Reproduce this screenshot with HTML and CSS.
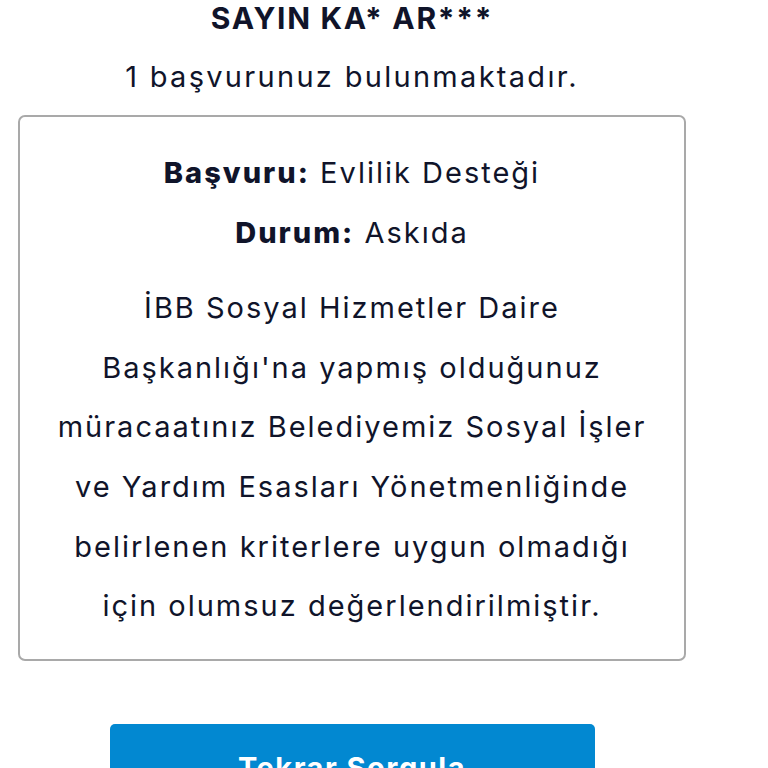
FILE: index.html
```html
<!DOCTYPE html>
<html lang="tr">
<head>
<meta charset="utf-8">
<title>Başvuru Sorgulama</title>
<link rel="stylesheet" href="styles.css">
</head>
<body>
<main class="page">
  <h1 class="title">SAYIN KA* AR***</h1>
  <p class="subtitle">1 başvurunuz bulunmaktadır.</p>
  <section class="card">
    <p class="row"><strong>Başvuru:</strong> Evlilik Desteği</p>
    <p class="row"><strong>Durum:</strong> Askıda</p>
    <p class="message">İBB Sosyal Hizmetler Daire<br>Başkanlığı'na yapmış olduğunuz<br>müracaatınız Belediyemiz Sosyal İşler<br>ve Yardım Esasları Yönetmenliğinde<br>belirlenen kriterlere uygun olmadığı<br>için olumsuz değerlendirilmiştir.</p>
  </section>
  <button class="btn" type="button">Tekrar Sorgula</button>
</main>
</body>
</html>
```
FILE: styles.css
```css
html, body {
  margin: 0;
  padding: 0;
  background: #ffffff;
}
body {
  font-family: Inter, "Open Sans", sans-serif;
  color: #10142a;
  overflow: hidden;
}
.page {
  width: 704px;
  display: flex;
  flex-direction: column;
  align-items: center;
}
.title {
  margin: 0;
  font-size: 30px;
  font-weight: 700;
  line-height: 36px;
  letter-spacing: 1.7px;
}
.subtitle {
  margin: 21px 0 0;
  font-size: 29px;
  font-weight: 400;
  line-height: 40px;
  letter-spacing: 2.3px;
}
.card {
  box-sizing: border-box;
  width: 668px;
  margin-top: 18px;
  padding: 26px 10px 23px;
  border: 2px solid #a9a9a9;
  border-radius: 7px;
  text-align: center;
  font-size: 29px;
  line-height: 59.6px;
  letter-spacing: 2px;
}
.row {
  margin: 0;
}
.row strong {
  font-weight: 800;
}
.message {
  margin: 16px 0 0;
}
.btn {
  flex: none;
  margin-top: 63px;
  width: 485px;
  height: 88px;
  border: 0;
  border-radius: 5px;
  background: #0288d1;
  color: #ffffff;
  font-family: Inter, "Open Sans", sans-serif;
  font-size: 29px;
  font-weight: 700;
  letter-spacing: 1.5px;
}
```
